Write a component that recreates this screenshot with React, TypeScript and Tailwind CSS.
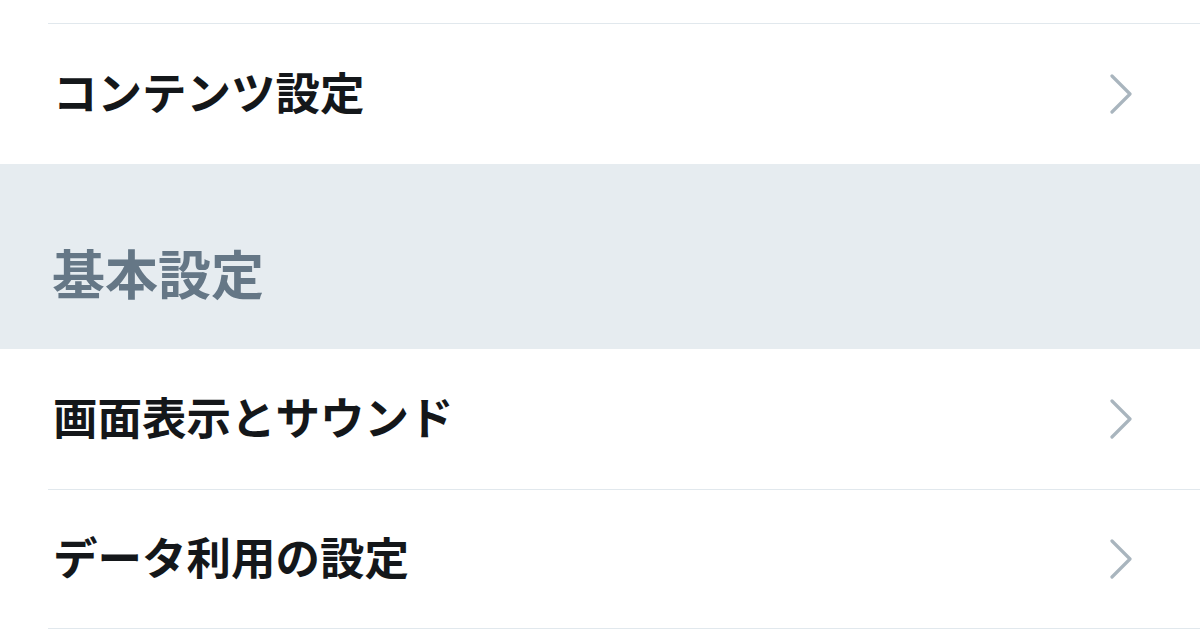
const FONT = '"Noto Sans CJK JP", "Noto Sans", sans-serif'

function Chevron() {
  return (
    <svg width="24" height="40" viewBox="0 0 24 40" fill="none" className="shrink-0">
      <polyline
        points="3,2 21,20 3,38"
        stroke="#a9b5be"
        strokeWidth="3.2"
        strokeLinecap="round"
        strokeLinejoin="round"
      />
    </svg>
  )
}

function Divider() {
  return <div className="ml-[48px] h-px bg-[#e1e8ed]" />
}

function Row({ label, height = 'h-[140px]' }: { label: string; height?: string }) {
  return (
    <div className={`flex items-center justify-between pl-[53px] pr-[67px] ${height}`}>
      <span className="pb-[6px] text-[44.5px] leading-none font-bold text-[#14171a]">{label}</span>
      <Chevron />
    </div>
  )
}

export default function App() {
  return (
    <div className="w-[1200px] h-[630px] overflow-hidden bg-white" style={{ fontFamily: FONT }}>
      <div className="h-[23px]" />
      <Divider />
      <Row label="コンテンツ設定" />

      {/* セクション見出し */}
      <div className="h-[185px] bg-[#e6ecf0] pl-[52px] pt-[82px]">
        <span className="text-[53px] leading-none font-bold text-[#657786]">基本設定</span>
      </div>

      <Row label="画面表示とサウンド" />
      <Divider />
      <Row label="データ利用の設定" height="h-[138px]" />
      <Divider />
    </div>
  )
}
